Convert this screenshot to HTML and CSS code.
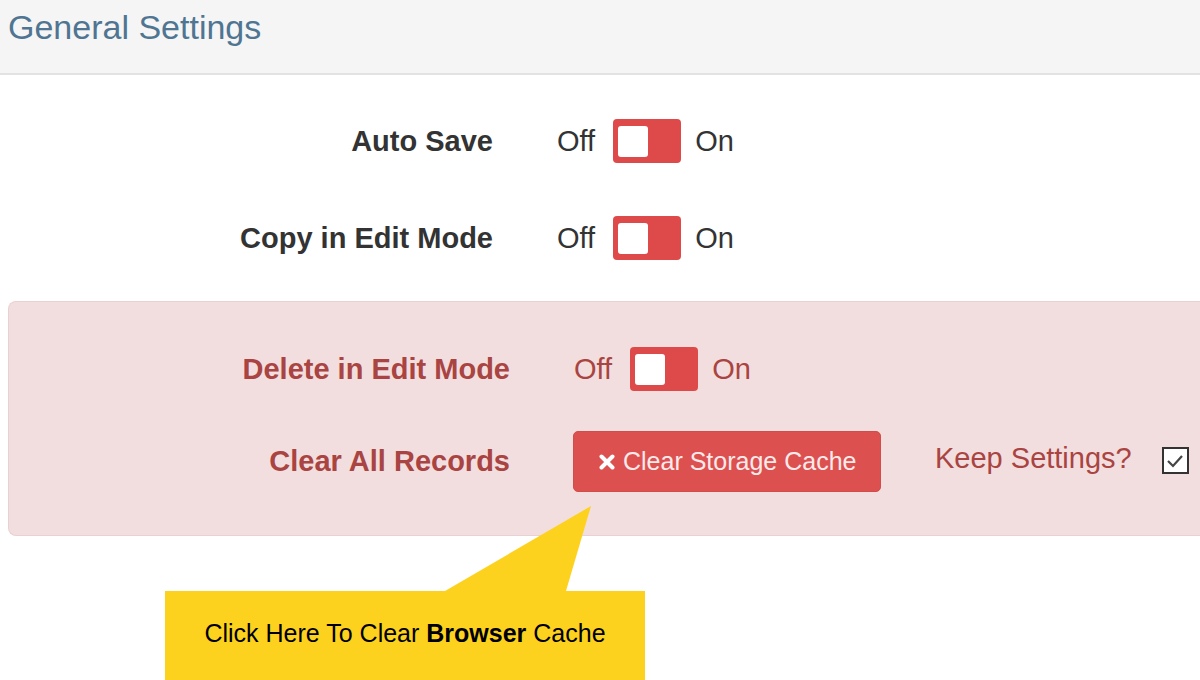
FILE: index.html
```html
<!DOCTYPE html>
<html>
<head>
<meta charset="utf-8">
<link rel="stylesheet" href="styles.css">
</head>
<body>
<header class="header">
  <h1 class="title">General Settings</h1>
</header>
<main class="form">
  <div class="row">
    <div class="label">Auto Save</div>
    <div class="control">
      <span class="state">Off</span>
      <span class="toggle"><span class="knob"></span></span>
      <span class="state">On</span>
    </div>
  </div>
  <div class="row">
    <div class="label">Copy in Edit Mode</div>
    <div class="control">
      <span class="state">Off</span>
      <span class="toggle"><span class="knob"></span></span>
      <span class="state">On</span>
    </div>
  </div>
  <section class="danger">
    <div class="row">
      <div class="label">Delete in Edit Mode</div>
      <div class="control">
        <span class="state">Off</span>
        <span class="toggle"><span class="knob"></span></span>
        <span class="state">On</span>
      </div>
    </div>
    <div class="row row-btn">
      <div class="label">Clear All Records</div>
      <div class="control">
        <button class="btn-clear">
          <svg class="xicon" width="16" height="16" viewBox="0 0 16 16"><path d="M2.5 2.5 L13.5 13.5 M13.5 2.5 L2.5 13.5" stroke="#fff" stroke-width="4" stroke-linecap="round"/></svg>
          <span>Clear Storage Cache</span>
        </button>
        <span class="keep">Keep Settings?</span>
        <span class="checkbox"><svg width="22" height="22" viewBox="0 0 22 22"><path d="M4 11 L9 16 L18 6" fill="none" stroke="#444" stroke-width="2.2"/></svg></span>
      </div>
    </div>
  </section>
</main>
<div class="callout">
  <svg class="pointer" width="160" height="90" viewBox="0 0 160 90"><polygon points="0,85 146,0 121,85" fill="#fdd21f"/></svg>
  <p class="callout-text">Click Here To Clear <b>Browser</b> Cache</p>
</div>
</body>
</html>
```

FILE: styles.css
```css
html, body {
  margin: 0;
  padding: 0;
  background: #fff;
  overflow: hidden;
  height: 680px;
}
body {
  font-family: "Liberation Sans", Arial, sans-serif;
  color: #333;
  position: relative;
}
.header {
  background: #f5f5f5;
  border-bottom: 2px solid #e3e3e3;
  padding: 7px 0 0 8px;
  box-sizing: border-box;
  height: 75px;
}
.title {
  margin: 0;
  font-size: 34px;
  line-height: 40px;
  font-weight: normal;
  color: #4f7592;
}
.form {
  padding-top: 44px;
}
.row {
  display: grid;
  grid-template-columns: 493px auto;
  column-gap: 64px;
  align-items: center;
  height: 44px;
}
.row + .row {
  margin-top: 53px;
}
.label {
  text-align: right;
  font-weight: bold;
  font-size: 29px;
  color: #333;
}
.control {
  display: flex;
  align-items: center;
}
.state {
  font-size: 29px;
  color: #333;
}
.toggle {
  display: flex;
  align-items: center;
  box-sizing: border-box;
  width: 68px;
  height: 44px;
  margin: 0 14px 0 18px;
  padding: 0 5px;
  background: #de4a4a;
  border-radius: 4px;
}
.knob {
  width: 30px;
  height: 31px;
  background: #fff;
  border-radius: 3px;
}
.danger {
  margin: 41px 0 0 8px;
  border: 1px solid #ebd0d3;
  border-right: none;
  border-radius: 8px 0 0 8px;
  background: #f2dede;
  padding: 45px 0 43px 8px;
}
.danger .row + .row {
  margin-top: 40px;
}
.danger .row-btn {
  height: 61px;
}
.danger .label,
.danger .state,
.danger .keep {
  color: #a94442;
}
.btn-clear {
  display: flex;
  align-items: center;
  gap: 8px;
  box-sizing: border-box;
  width: 308px;
  height: 61px;
  margin-left: -1px;
  padding: 0 0 0 25px;
  border: 1px solid #d24d49;
  border-radius: 5px;
  background: #dd5050;
  color: #fbeaea;
  font-family: "Liberation Sans", Arial, sans-serif;
  font-size: 25px;
}
.xicon {
  display: block;
}
.keep {
  font-size: 29px;
  margin-left: 54px;
  margin-top: -6px;
}
.checkbox {
  display: flex;
  align-items: center;
  justify-content: center;
  box-sizing: border-box;
  width: 27px;
  height: 27px;
  margin-left: 30px;
  margin-top: -2px;
  border: 2px solid #333;
  background: #fff;
}
.callout {
  position: absolute;
  left: 165px;
  top: 591px;
  width: 480px;
  height: 89px;
  background: #fdd21f;
  display: flex;
  align-items: center;
  justify-content: center;
}
.pointer {
  position: absolute;
  left: 280px;
  top: -85px;
}
.callout-text {
  margin: 0 0 4px 0;
  font-size: 25px;
  color: #000;
}
```
